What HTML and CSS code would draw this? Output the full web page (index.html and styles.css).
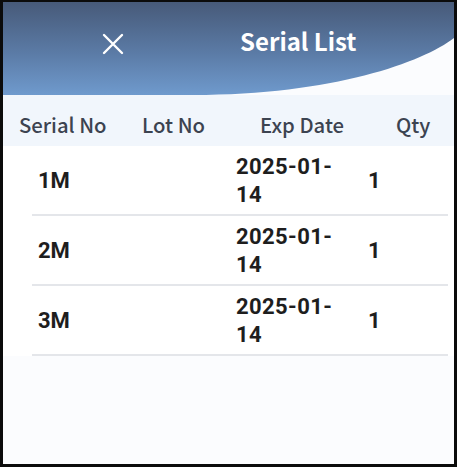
FILE: index.html
```html
<!DOCTYPE html>
<html>
<head>
<meta charset="utf-8">
<link rel="stylesheet" href="styles.css">
</head>
<body>
<div class="frame">
  <header class="topbar">
    <button class="close" aria-label="Close">
      <svg width="22" height="22" viewBox="0 0 22 22"><path d="M2 2 L20 20 M20 2 L2 20" stroke="#fff" stroke-width="2.4" stroke-linecap="round" fill="none"/></svg>
    </button>
    <h1 class="title">Serial List</h1>
  </header>
  <div class="cols">
    <span class="c-serial">Serial No</span>
    <span class="c-lot">Lot No</span>
    <span class="c-exp">Exp Date</span>
    <span class="c-qty">Qty</span>
  </div>
  <div class="rows">
    <div class="row">
      <span class="r-serial">1M</span>
      <span class="r-lot"></span>
      <span class="r-exp">2025-01-14</span>
      <span class="r-qty">1</span>
    </div>
    <div class="row">
      <span class="r-serial">2M</span>
      <span class="r-lot"></span>
      <span class="r-exp">2025-01-14</span>
      <span class="r-qty">1</span>
    </div>
    <div class="row">
      <span class="r-serial">3M</span>
      <span class="r-lot"></span>
      <span class="r-exp">2025-01-14</span>
      <span class="r-qty">1</span>
    </div>
  </div>
  <div class="rest"></div>
</div>
</body>
</html>
```

FILE: styles.css
```css
* { box-sizing: border-box; }
html, body { margin: 0; padding: 0; }
body { width: 457px; height: 467px; background: #000; overflow: hidden; }
.frame {
  width: 457px;
  height: 467px;
  border: 3px solid #0b0b0b;
  border-top-width: 2px;
  background: #fbfcfe;
  display: flex;
  flex-direction: column;
}
.topbar {
  height: 93px;
  flex: none;
  background: linear-gradient(180deg, #475a79 0%, #5b7ba6 55%, #6f9acd 100%);
  clip-path: path('M0 0 H451 V36 C 420 60, 330 93, 190 93 H0 Z');
  display: flex;
  align-items: flex-start;
  padding: 30px 0 0 99px;
}
.close {
  background: none;
  border: 0;
  padding: 0;
  width: 22px;
  height: 22px;
  display: flex;
  margin-top: 1px;
}
.title {
  margin: -7px 0 0 116px;
  font-family: "Noto Sans CJK SC", "Noto Sans", sans-serif;
  font-weight: 700;
  font-size: 24px;
  color: #fff;
  line-height: 32px;
}
.cols {
  height: 51px;
  flex: none;
  background: #f1f6fc;
  display: flex;
  align-items: center;
  padding: 6px 0 0 16px;
  font-family: "Noto Sans CJK SC", "Noto Sans", sans-serif;
  font-weight: 500;
  font-size: 20.3px;
  color: #3c4350;
}
.c-serial { width: 123px; }
.c-lot { width: 118px; }
.c-exp { width: 136px; }
.rows {
  background: #fff;
  padding: 0 6px 0 29px;
}
.row {
  height: 70px;
  display: flex;
  align-items: center;
  border-bottom: 2px solid #e4e6ea;
  font-family: Roboto, sans-serif;
  font-weight: 700;
  font-size: 22px;
  color: #1e1e1e;
  line-height: 28px;
  padding: 2px 0 0 6px;
}
.r-serial { width: 198px; }
.r-lot { width: 0; }
.r-exp { width: 132px; padding-right: 22px; letter-spacing: 0.4px; }
.rest { flex: 1; background: #fbfcfe; }
```
